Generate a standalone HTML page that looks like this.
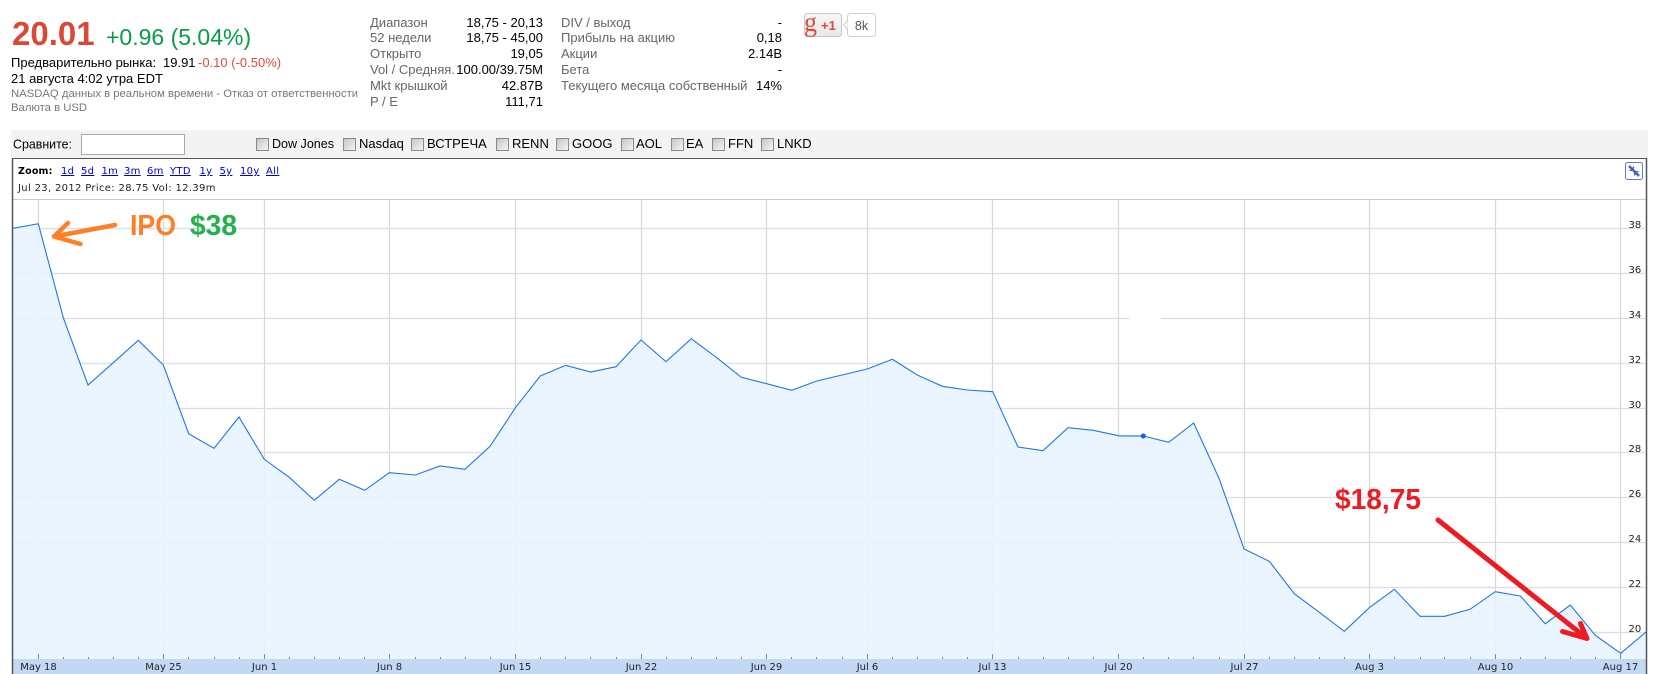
<!DOCTYPE html>
<html><head><meta charset="utf-8"><style>
html,body{margin:0;padding:0;background:#fff;width:1656px;height:674px;overflow:hidden}
svg{display:block}
text{font-family:"Liberation Sans",Arial,sans-serif;font-size:13px;fill:#000}
.g{fill:#666}
.s{font-size:11.3px;fill:#777}
.d{font-family:"DejaVu Sans",Verdana,sans-serif;font-size:10px;fill:#222}
.l{font-family:"DejaVu Sans",Verdana,sans-serif;font-size:10px;fill:#0000cc;text-decoration:underline;letter-spacing:.3px}
.a{font-family:"DejaVu Sans",Verdana,sans-serif;font-size:10px;fill:#222;text-anchor:middle}
.e{text-anchor:end}
.h{stroke:#dcdcee;stroke-width:1.2}
.v{stroke:#d4d8d6;stroke-width:1.2}
.an{font-weight:bold;font-size:29px}
</style></head><body>
<svg width="1656" height="674" viewBox="0 0 1656 674" xmlns="http://www.w3.org/2000/svg">
<defs><linearGradient id="cb" x1="0" y1="0" x2="1" y2="1"><stop offset="0" stop-color="#c4c4c4"/><stop offset="1" stop-color="#f6f6f6"/></linearGradient>
<linearGradient id="gb" x1="0" y1="0" x2="0" y2="1"><stop offset="0" stop-color="#f7f7f7"/><stop offset="1" stop-color="#e8e8e8"/></linearGradient></defs>

<!-- header -->
<text x="12" y="45" style="font-size:33px;font-weight:bold;fill:#d84a38">20.01</text>
<text x="106" y="45" style="font-size:23px;fill:#0a9a4a">+0.96 (5.04%)</text>
<text x="11" y="67">Предварительно рынка:</text>
<text x="163" y="67">19.91</text>
<text x="198" y="67" style="fill:#dd4b39">-0.10 (-0.50%)</text>
<text x="11" y="83">21 августа 4:02 утра EDT</text>
<text x="11" y="97" class="s">NASDAQ данных в реальном времени - Отказ от ответственности</text>
<text x="11" y="111" class="s">Валюта в USD</text>

<text x="370" y="27" class="g">Диапазон</text><text x="543" y="27" class="e">18,75 - 20,13</text>
<text x="370" y="42" class="g">52 недели</text><text x="543" y="42" class="e">18,75 - 45,00</text>
<text x="370" y="58" class="g">Открыто</text><text x="543" y="58" class="e">19,05</text>
<text x="370" y="74" class="g">Vol / Средняя.</text><text x="543" y="74" class="e">100.00/39.75M</text>
<text x="370" y="90" class="g">Mkt крышкой</text><text x="543" y="90" class="e">42.87B</text>
<text x="370" y="106" class="g">P / E</text><text x="543" y="106" class="e">111,71</text>

<text x="561" y="27" class="g">DIV / выход</text><text x="782" y="27" class="e">-</text>
<text x="561" y="42" class="g">Прибыль на акцию</text><text x="782" y="42" class="e">0,18</text>
<text x="561" y="58" class="g">Акции</text><text x="782" y="58" class="e">2.14B</text>
<text x="561" y="74" class="g">Бета</text><text x="782" y="74" class="e">-</text>
<text x="561" y="90" class="g">Текущего месяца собственный</text><text x="782" y="90" class="e">14%</text>

<!-- +1 -->
<rect x="804.5" y="13.5" width="37" height="23" rx="3" fill="url(#gb)" stroke="#c8c8c8"/>
<text x="804" y="31" style="font-family:'Liberation Serif',serif;font-size:27px;font-weight:normal;fill:#dd4b39" textLength="13" lengthAdjust="spacingAndGlyphs">g</text>
<text x="821" y="30" style="font-size:13px;font-weight:bold;fill:#dd4b39">+1</text>
<rect x="847.5" y="13.5" width="28" height="23" rx="3" fill="#fff" stroke="#d0d0d0"/>
<path d="M847.5 20.5 L843.5 25 L847.5 29.5" fill="#fff" stroke="#d0d0d0"/>
<text x="861.5" y="30" style="font-size:12.5px;fill:#555;text-anchor:middle">8k</text>

<!-- compare bar -->
<rect x="11" y="130" width="1637" height="28" fill="#f3f3f3"/>
<text x="13" y="148.500" textLength="59" lengthAdjust="spacingAndGlyphs">Сравните:</text>
<rect x="81.5" y="134.5" width="103" height="20" fill="#fff" stroke="#aaa"/>
<g fill="url(#cb)" stroke="#8a8a8a">
<rect x="256.5" y="138.5" width="12" height="12"/><rect x="343.5" y="138.5" width="12" height="12"/><rect x="411.5" y="138.5" width="12" height="12"/><rect x="496.5" y="138.5" width="12" height="12"/><rect x="556.5" y="138.5" width="12" height="12"/><rect x="621.5" y="138.5" width="12" height="12"/><rect x="671.5" y="138.5" width="12" height="12"/><rect x="712.5" y="138.5" width="12" height="12"/><rect x="761.5" y="138.5" width="12" height="12"/>
</g>
<text x="272" y="148" textLength="62" lengthAdjust="spacingAndGlyphs">Dow Jones</text><text x="359" y="148">Nasdaq</text><text x="427" y="148">ВСТРЕЧА</text><text x="512" y="148">RENN</text><text x="572" y="148">GOOG</text><text x="636" y="148">AOL</text><text x="686" y="148">EA</text><text x="728" y="148">FFN</text><text x="777" y="148">LNKD</text>

<!-- chart frame -->
<rect x="12" y="158" width="1635" height="516" fill="#fff"/>
<text x="18" y="174" class="d" style="font-weight:bold;fill:#000;font-size:9.5px;letter-spacing:.2px">Zoom:</text>
<text x="61" y="174" class="l">1d</text><text x="81" y="174" class="l">5d</text><text x="101.5" y="174" class="l">1m</text><text x="124" y="174" class="l">3m</text><text x="147" y="174" class="l">6m</text><text x="170" y="174" class="l">YTD</text><text x="199.5" y="174" class="l">1y</text><text x="219.5" y="174" class="l">5y</text><text x="240" y="174" class="l">10y</text><text x="266" y="174" class="l">All</text>
<text x="18" y="191" class="d" style="letter-spacing:.33px">Jul 23, 2012 Price: 28.75 Vol: 12.39m</text>

<rect x="1625.5" y="162.500" width="17" height="17" rx="2" fill="#fff" stroke="#6478d0" stroke-width="1"/>
<path d="M1629 166l10 10" stroke="#4a5fc0" stroke-width="2.500"/>
<path d="M1634 166v5h-5zM1634 176v-5h5z" fill="#4a5fc0"/>

<line x1="13" y1="199.500" x2="1646" y2="199.500" stroke="#ccc"/>

<!-- grid -->
<g>
<line class="v" x1="38.500" y1="200" x2="38.500" y2="659"/><line class="v" x1="163.500" y1="200" x2="163.500" y2="659"/><line class="v" x1="264.500" y1="200" x2="264.500" y2="659"/><line class="v" x1="389.500" y1="200" x2="389.500" y2="659"/><line class="v" x1="515.500" y1="200" x2="515.500" y2="659"/><line class="v" x1="641.500" y1="200" x2="641.500" y2="659"/><line class="v" x1="766.500" y1="200" x2="766.500" y2="659"/><line class="v" x1="867.500" y1="200" x2="867.500" y2="659"/><line class="v" x1="992.500" y1="200" x2="992.500" y2="659"/><line class="v" x1="1118.500" y1="200" x2="1118.500" y2="659"/><line class="v" x1="1244.500" y1="200" x2="1244.500" y2="659"/><line class="v" x1="1369.500" y1="200" x2="1369.500" y2="659"/><line class="v" x1="1495.500" y1="200" x2="1495.500" y2="659"/><line class="v" x1="1620.500" y1="200" x2="1620.500" y2="659"/>
</g>
<g>
<line class="h" x1="13" y1="228.500" x2="1645" y2="228.500"/><line class="h" x1="13" y1="273.500" x2="1645" y2="273.500"/><line class="h" x1="13" y1="318.500" x2="1645" y2="318.500"/><line class="h" x1="13" y1="363.500" x2="1645" y2="363.500"/><line class="h" x1="13" y1="408.500" x2="1645" y2="408.500"/><line class="h" x1="13" y1="452.500" x2="1645" y2="452.500"/><line class="h" x1="13" y1="497.500" x2="1645" y2="497.500"/><line class="h" x1="13" y1="542.500" x2="1645" y2="542.500"/><line class="h" x1="13" y1="587.500" x2="1645" y2="587.500"/><line class="h" x1="13" y1="632.500" x2="1645" y2="632.500"/>
</g>
<rect x="1129" y="314" width="32" height="9" fill="#fff"/>

<polygon fill="#e8f4ff" fill-opacity=".9" points="13,659 13,228.300 38.300,223.700 63.300,317.700 88,385 113.300,362.700 138.300,340.300 163.300,365 188.700,433.700 214,448.300 239,417 264.300,459.300 289.300,477.300 314.300,500.300 339.300,479.300 364.700,490.300 389.300,472.700 415.300,475 440,466 465,469.300 490.300,446 515.700,407.300 540.300,376 565.700,365.300 590.700,372 616,366.700 641,340 666,361.700 691.300,338.700 716.300,357.300 741.300,377.300 766.700,383.700 791.700,390.300 816.700,381 842,375 867.300,369 892.300,359.300 917.300,375 942.300,386.300 967.300,390 992.700,391.700 1018,447 1043,450.700 1068,427.700 1093.300,430.300 1118.300,435.700 1143.300,436 1168.700,442.300 1193.700,423 1219,478.300 1244,549 1269.300,561.300 1294.300,593.700 1319.300,612.300 1344.300,631.300 1369.300,607.700 1394.300,589.300 1420,616.300 1444.700,616.300 1470,609.300 1495.300,591.700 1520.300,596 1545.300,623.700 1570.300,605 1595.300,635.300 1620.700,653.300 1646,632 1646,659"/>
<polyline fill="none" stroke="#1f78dc" stroke-width="1.100" points="13,228.300 38.300,223.700 63.300,317.700 88,385 113.300,362.700 138.300,340.300 163.300,365 188.700,433.700 214,448.300 239,417 264.300,459.300 289.300,477.300 314.300,500.300 339.300,479.300 364.700,490.300 389.300,472.700 415.300,475 440,466 465,469.300 490.300,446 515.700,407.300 540.300,376 565.700,365.300 590.700,372 616,366.700 641,340 666,361.700 691.300,338.700 716.300,357.300 741.300,377.300 766.700,383.700 791.700,390.300 816.700,381 842,375 867.300,369 892.300,359.300 917.300,375 942.300,386.300 967.300,390 992.700,391.700 1018,447 1043,450.700 1068,427.700 1093.300,430.300 1118.300,435.700 1143.300,436 1168.700,442.300 1193.700,423 1219,478.300 1244,549 1269.300,561.300 1294.300,593.700 1319.300,612.300 1344.300,631.300 1369.300,607.700 1394.300,589.300 1420,616.300 1444.700,616.300 1470,609.300 1495.300,591.700 1520.300,596 1545.300,623.700 1570.300,605 1595.300,635.300 1620.700,653.300 1646,632"/>
<line x1="1118.300" y1="435.800" x2="1143.300" y2="436" stroke="#6aa6ea" stroke-width="1.800"/>
<circle cx="1143.300" cy="436" r="2.500" fill="#0a66d8"/>

<!-- y labels -->
<text x="1628.500" y="228" class="d">38</text><text x="1628.500" y="273" class="d">36</text><text x="1628.500" y="318" class="d">34</text><text x="1628.500" y="363" class="d">32</text><text x="1628.500" y="408" class="d">30</text><text x="1628.500" y="452" class="d">28</text><text x="1628.500" y="497" class="d">26</text><text x="1628.500" y="542" class="d">24</text><text x="1628.500" y="587" class="d">22</text><text x="1628.500" y="632" class="d">20</text>

<!-- x axis -->
<rect x="13" y="659" width="1633" height="15" fill="#c3d9f3"/>
<path stroke="#888" stroke-width="1" fill="none" d="M38.500 654v5M163.500 654v5M264.500 654v5M389.500 654v5M515.500 654v5M641.500 654v5M766.500 654v5M867.500 654v5M992.500 654v5M1118.500 654v5M1244.500 654v5M1369.500 654v5M1495.500 654v5M1620.500 654v5M63.500 657v2M88.500 657v2M113.500 657v2M138.500 657v2M188.500 657v2M214.500 657v2M239.500 657v2M289.500 657v2M314.500 657v2M339.500 657v2M364.500 657v2M415.500 657v2M440.500 657v2M465.500 657v2M490.500 657v2M540.500 657v2M565.500 657v2M590.500 657v2M616.500 657v2M666.500 657v2M691.500 657v2M716.500 657v2M741.500 657v2M791.500 657v2M816.500 657v2M842.500 657v2M892.500 657v2M917.500 657v2M942.500 657v2M967.500 657v2M1018.500 657v2M1043.500 657v2M1068.500 657v2M1093.500 657v2M1143.500 657v2M1168.500 657v2M1193.500 657v2M1219.500 657v2M1269.500 657v2M1294.500 657v2M1319.500 657v2M1344.500 657v2M1394.500 657v2M1420.500 657v2M1444.500 657v2M1470.500 657v2M1520.500 657v2M1545.500 657v2M1570.500 657v2M1595.500 657v2"/>
<text x="38.500" y="670" class="a">May 18</text><text x="163.500" y="670" class="a">May 25</text><text x="264.500" y="670" class="a">Jun 1</text><text x="389.500" y="670" class="a">Jun 8</text><text x="515.500" y="670" class="a">Jun 15</text><text x="641.500" y="670" class="a">Jun 22</text><text x="766.500" y="670" class="a">Jun 29</text><text x="867.500" y="670" class="a">Jul 6</text><text x="992.500" y="670" class="a">Jul 13</text><text x="1118.500" y="670" class="a">Jul 20</text><text x="1244.500" y="670" class="a">Jul 27</text><text x="1369.500" y="670" class="a">Aug 3</text><text x="1495.500" y="670" class="a">Aug 10</text><text x="1620.500" y="670" class="a">Aug 17</text>

<!-- frame borders -->
<path d="M12.500 158V674M1646.500 158V674" stroke="#555" stroke-width="1.500" fill="none"/>
<path d="M12 158.500H1647" stroke="#555" stroke-width="1"/>

<!-- annotations -->
<path d="M115 225 L54 236.500 M68 223 L54 236.500 L80.500 244" stroke="#ff7f27" stroke-width="4.500" stroke-linecap="round" stroke-linejoin="round" fill="none"/>
<text x="130" y="235" class="an" style="fill:#ff7f27" textLength="46" lengthAdjust="spacingAndGlyphs">IPO</text>
<text x="190" y="235" class="an" style="fill:#22b14c" textLength="47" lengthAdjust="spacingAndGlyphs">$38</text>
<text x="1335" y="509" class="an" style="fill:#ed1c24" textLength="86" lengthAdjust="spacingAndGlyphs">$18,75</text>
<path d="M1438 520 L1587 638.500 M1580.500 623.500 L1587 638.500 L1562.500 631.500" stroke="#ed1c24" stroke-width="5" stroke-linecap="round" stroke-linejoin="round" fill="none"/>
</svg>
</body></html>
